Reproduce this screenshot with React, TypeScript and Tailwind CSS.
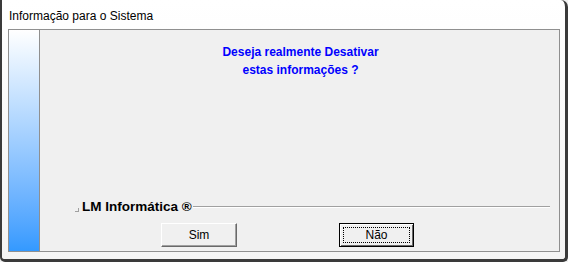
export default function App() {
  return (
    <div className="w-[568px] h-[262px] bg-[#f0f0f0]">
      <div
        className="w-[568px] h-[262px] flex flex-col border-l-2 border-r-[3px] border-b-[3px] border-[#3a3a3a] rounded-tr-[7px] rounded-bl-[5px] rounded-br-[5px] bg-gradient-to-b from-[#ffffff] to-[#f4f4f4]"
        style={{ fontFamily: '"Liberation Sans", Arial, sans-serif' }}
      >
        {/* title bar */}
        <div className="h-[29px] flex items-center pl-[7px] pt-[2px] text-[12px] text-[#000000]">
          Informação para o Sistema
        </div>

        {/* panel */}
        <div className="ml-[6px] mr-[5px] h-[223px] flex border border-[#8f8f8f] bg-[#f0f0f0]">
          <div className="w-[31px] border-r border-[#8f8f8f] bg-gradient-to-b from-[#ffffff] to-[#3399ff]" />

          <div className="flex-1 flex flex-col">
            <div className="pt-[13px] flex flex-col items-center text-[12px] leading-[18px] font-bold text-[#0000ff] pl-[2px]">
              <span>Deseja realmente Desativar</span>
              <span>estas informações ?</span>
            </div>

            <div className="flex-1" />

            {/* group box header */}
            <div className="h-[16px] flex items-center pl-[35px] pr-[9px]">
              <div className="w-[4px] h-[4px] mt-[5px] mr-[3px] border-r border-b border-[#a0a0a0]" />
              <span className="text-[13.5px] font-bold text-[#000000] leading-none">
                LM Informática ®
              </span>
              <div className="flex-1 ml-[1px] h-[2px] border-t border-[#a0a0a0] border-b border-b-[#ffffff]" />
            </div>

            <div className="h-[8px]" />

            {/* buttons */}
            <div className="flex pl-[121px] gap-[102px] pb-[4px]">
              <button
                type="button"
                className="w-[76px] h-[24px] flex items-center justify-center text-[12px] text-[#000000] bg-[#f0f0f0] border border-t-[#ffffff] border-l-[#ffffff] border-r-[#696969] border-b-[#696969] shadow-[inset_-1px_-1px_0_#a0a0a0]"
              >
                Sim
              </button>
              <button
                type="button"
                className="w-[75px] h-[24px] p-[3px] bg-[#f0f0f0] border border-[#000000] shadow-[inset_1px_1px_0_#ffffff,inset_-1px_-1px_0_#696969]"
              >
                <div className="w-full h-full flex items-center justify-center text-[12px] text-[#000000] border border-dotted border-[#000000]">
                  Não
                </div>
              </button>
            </div>
          </div>
        </div>
      </div>
    </div>
  );
}
